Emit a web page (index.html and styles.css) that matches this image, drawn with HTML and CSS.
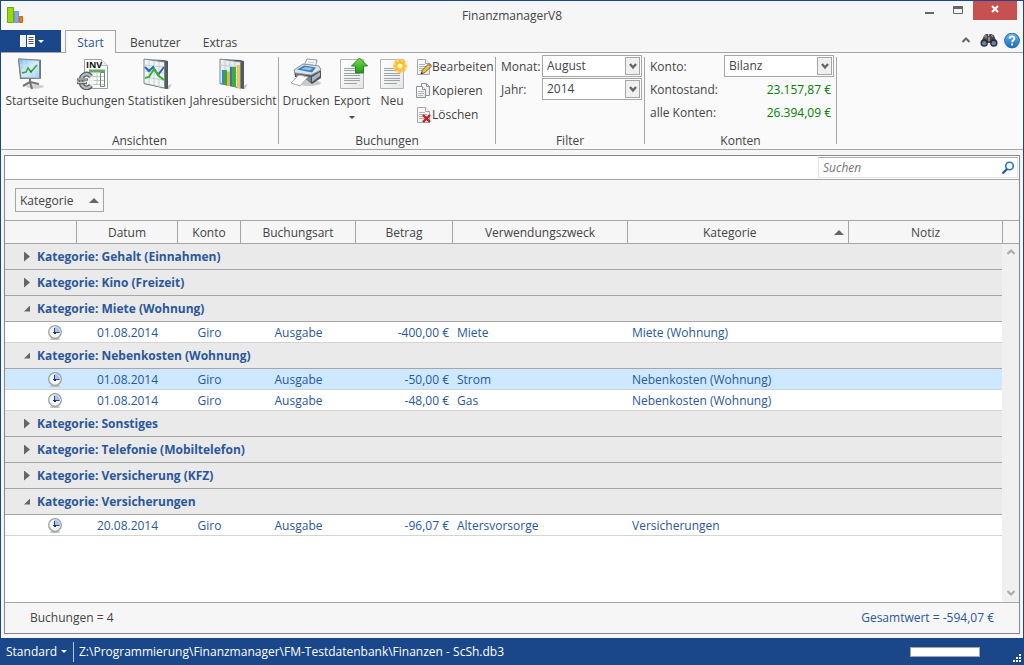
FILE: index.html
```html
<!DOCTYPE html>
<html lang="de">
<head>
<meta charset="utf-8">
<title>FinanzmanagerV8</title>
<link rel="stylesheet" href="styles.css">
</head>
<body>
<svg class="defs" aria-hidden="true">
  <defs>
    <linearGradient id="sky" x1="0" y1="0" x2="1" y2="1"><stop offset="0" stop-color="#7fbbe6"/><stop offset=".5" stop-color="#d3ecf9"/><stop offset="1" stop-color="#a4d3f0"/></linearGradient>
    <linearGradient id="steel" x1="0" y1="0" x2="1" y2="0"><stop offset="0" stop-color="#9aa3aa"/><stop offset="1" stop-color="#4d565d"/></linearGradient>
    <linearGradient id="paper" x1="0" y1="0" x2="1" y2="1"><stop offset="0" stop-color="#ffffff"/><stop offset="1" stop-color="#e3e6e8"/></linearGradient>
    <linearGradient id="green" x1="0" y1="0" x2="0" y2="1"><stop offset="0" stop-color="#7be04a"/><stop offset="1" stop-color="#1d9a18"/></linearGradient>
    <radialGradient id="glow"><stop offset="0" stop-color="#fff6b0"/><stop offset=".3" stop-color="#ffc02c"/><stop offset=".65" stop-color="#ffc94c"/><stop offset="1" stop-color="#ffd976" stop-opacity="0"/></radialGradient>
    <linearGradient id="help" x1="0" y1="0" x2="0" y2="1"><stop offset="0" stop-color="#6db8ee"/><stop offset="1" stop-color="#1668b4"/></linearGradient>
    <symbol id="clock" viewBox="0 0 16 16">
      <ellipse cx="8" cy="14" rx="5" ry="1.100" fill="#b9bbb9"/>
      <circle cx="8" cy="7" r="6.300" fill="#f1f4f1" stroke="#9aa3a1" stroke-width="1.300"/>
      <path d="M7.500 2a5 5 0 0 1 5.500 5.500H7.500z" fill="#a9c1f4"/>
      <path d="M7.500 3v6M6 7.500h6.500" stroke="#2c4390" stroke-width="1" fill="none"/>
      <path d="M7 7h2v2H7z" fill="#222c55"/>
    </symbol>
    <symbol id="mini-page" viewBox="0 0 16 16">
      <path d="M1.500 .5h8l4 4v11h-12z" fill="url(#paper)" stroke="#a5a9ac"/>
      <path d="M9.500.5v4h4" fill="#fff" stroke="#a5a9ac"/>
      <path d="M3 5.500h6M3 7.500h8M3 9.500h8M3 11.500h8" stroke="#b1b5b8"/>
    </symbol>
  </defs>
</svg>
<div class="window">
  <header class="titlebar">
    <svg class="app-icon" width="18" height="18" viewBox="0 0 18 18">
      <path d="M.5 .5h6v15h-6z" fill="#98d810" stroke="#6ea90a"/><path d="M7.500 4.500h4v11h-4z" fill="#82a6ea" stroke="#7394d4"/><path d="M12.500 9.500h3v6h-3z" fill="#f18412" stroke="#c9650a"/>
    </svg>
    <h1 class="title">FinanzmanagerV8</h1>
    <div class="window-buttons">
      <button class="win-button" aria-label="Minimieren"><svg width="12" height="12" viewBox="0 0 12 12"><path d="M1 7h9v2H1z" fill="#666"/></svg></button>
      <button class="win-button" aria-label="Maximieren"><svg width="12" height="12" viewBox="0 0 12 12"><path d="M1.500 1.500h9v7h-9z" fill="none" stroke="#666"/><path d="M1 1h10v3H1z" fill="#666"/></svg></button>
      <button class="win-button close" aria-label="Schließen"><svg width="10" height="10" viewBox="0 0 10 10"><path d="M2 1l6 6M8 1L2 7" stroke="#fff" stroke-width="2"/></svg></button>
    </div>
  </header>

  <nav class="tabs">
    <button class="app-menu" aria-label="Anwendungsmenü">
      <svg width="26" height="14" viewBox="0 0 26 14"><path d="M1 1h15v12H1z" fill="#fff"/><path d="M2 2h6v10H2z" fill="#eef1f6"/><path d="M7.500 1v12" stroke="#19478a"/><path d="M9.500 3.500h5M9.500 5.500h5M9.500 7.500h5M9.500 9.500h5" stroke="#555"/><path d="M19 6h6l-3 3z" fill="#fff"/></svg>
    </button>
    <button class="tab selected">Start</button>
    <button class="tab">Benutzer</button>
    <button class="tab">Extras</button>
    <div class="tab-tools">
      <button class="tool fold" aria-label="Menüband minimieren"><svg width="10" height="16" viewBox="0 0 10 16"><path d="M1.500 9L5 5.500 8.500 9" fill="none" stroke="#666" stroke-width="2"/></svg></button>
      <button class="tool" aria-label="Suchen"><svg width="18" height="16" viewBox="0 0 18 16">
        <path d="M1 10L4 2.500 6 1h2l.7 2.500L9.500 1h2l2.500 1.500L17 10z" fill="#48484a"/><path d="M4 3.500l2-1v3M11 2.500l2 1" stroke="#aaa" fill="none"/><path d="M8 4h2v4H8z" fill="#8c8c8c"/>
        <circle cx="4.200" cy="10" r="3.700" fill="#2c2c2e"/><circle cx="13.800" cy="10" r="3.700" fill="#2c2c2e"/><circle cx="4.200" cy="10.200" r="2.200" fill="#5c87b5"/><circle cx="13.800" cy="10.200" r="2.200" fill="#5c87b5"/></svg></button>
      <button class="tool" aria-label="Hilfe"><svg width="16" height="16" viewBox="0 0 16 16"><circle cx="8" cy="7.500" r="7.400" fill="url(#help)" stroke="#2a6cab"/><path d="M5.600 5.700C5.700 2.700 10.400 2.700 10.400 5.500c0 1.700-2.300 1.800-2.300 3.700M8.100 10.500v1.900" fill="none" stroke="#fff" stroke-width="1.900"/></svg></button>
    </div>
  </nav>

  <section class="ribbon">
    <div class="group">
      <div class="group-body">
        <button class="big start"><svg width="32" height="32" viewBox="0 0 32 32">
          <ellipse cx="19" cy="28.500" rx="9" ry="2.200" fill="#d2d2d2"/>
          <path d="M14 20v5M14 24l-7 4M14 24l2 7M14 24l9 2" stroke="#777" stroke-width="2.200" fill="none"/>
          <path d="M2 .8l23 1v19L4 21z" fill="#6d767c"/><path d="M2.500 .8l21 1.500v18L5 20z" fill="url(#sky)" stroke="#7b868e"/>
          <path d="M8 2v17M13 3v16M18 3v16M4 7h19M5 12h18" stroke="#cdeafa" stroke-width=".7"/>
          <path d="M6 15l4-1 2-4 3 4 6-7" fill="none" stroke="#3fa13c" stroke-width="1.500"/><circle cx="15" cy="13.500" r="1" fill="#237d25"/></svg>Startseite</button>
        <button class="big book"><svg width="32" height="32" viewBox="0 0 32 32">
          <path d="M7.500 1.500h17l6 6v23h-23z" fill="#fff" stroke="#9a9fa2"/><path d="M24.500 1.500v6h6" fill="#eceeef" stroke="#b5b9bb"/>
          <path d="M12 11.500h16v3H12z" fill="#62ad5e"/><path d="M12.500 14.500h15v12h-15zM12.500 18.500h15M12.500 22.500h15M20 14.500v12" fill="none" stroke="#b7cbb5"/>
          <path d="M23.500 14.500h4v14h-4z" fill="none" stroke="#75837c"/>
          <text class="inv" x="9" y="10">INV</text>
          <circle cx="9" cy="23" r="8" fill="#f3f3f3" opacity=".85"/>
          <path d="M14 18.500C10 13.500 4 17 4 23s6 9.500 10 4.500" fill="none" stroke="#555d61" stroke-width="5"/><path d="M14 18.500C10 13.500 4 17 4 23s6 9.500 10 4.500" fill="none" stroke="#b3babe" stroke-width="2.400"/>
          <path d="M0 21.500h11M0 25h10" stroke="#697176" stroke-width="2.400"/><path d="M1 21h9M1 24.500h8" stroke="#c5cacd"/></svg>Buchungen</button>
        <button class="big stat"><svg width="32" height="32" viewBox="0 0 32 32">
          <path d="M18 30l13-4-3 5z" fill="#c9c9c9"/><path d="M24 4.500L27 3v27l-3 1z" fill="#4f5b63"/><path d="M3 1l20 1 4 1v28L3 26z" fill="url(#steel)"/>
          <path d="M3 1l20.500 3v26L3 25.500z" fill="#f2f5f6" stroke="#7d878d"/><path d="M8 2v24M13 3v24M18 4v25M3 7l20 2M3 13l20 2M3 19l20 3" stroke="#c5ced2" fill="none"/>
          <path d="M4 9l4 4 4-4 5 8 6-8" fill="none" stroke="#2468b5" stroke-width="2"/><path d="M4 20l4-1 5-8 5 7 5 4" fill="none" stroke="#35b329" stroke-width="2"/></svg>Statistiken</button>
        <button class="big year"><svg width="32" height="32" viewBox="0 0 32 32">
          <path d="M18 30l13-4-3 5z" fill="#c9c9c9"/><path d="M3 1l20 1 4 1v28L3 26z" fill="#4f5b63"/>
          <path d="M3 1l20.500 3v26L3 25.500z" fill="#e9edef" stroke="#7d878d"/><path d="M8 2v24M13 3v24M18 4v25M3 7l20 2M3 13l20 2M3 19l20 3" stroke="#c5ced2" fill="none"/>
          <path d="M5 12h2v14H5z" fill="#258dd2"/><path d="M7 12h3v15H7z" fill="#39a73c"/><path d="M10 14h3v14h-3z" fill="#eab434"/><path d="M13 9h2v19h-2z" fill="#2878c4"/><path d="M15 9h4v20h-4z" fill="#41ad38"/><path d="M20 7h3v23h-3z" fill="#e8c753"/></svg>Jahresübersicht</button>
      </div>
      <div class="group-title">Ansichten</div>
    </div>
    <div class="group">
      <div class="group-body">
        <button class="big print"><svg width="32" height="32" viewBox="0 0 32 32">
          <ellipse cx="19" cy="25" rx="12" ry="3" fill="#c9c9c9"/>
          <path d="M14 8L17 1l10 1-2 9z" fill="#f6f8fa" stroke="#8f999f"/><path d="M18 4l6 .8M17 6l6 .8" stroke="#c1c9ce"/>
          <path d="M4 12l9-6 16 2 2 4v8l-9 6-5-4-12-3z" fill="#4b5257"/><path d="M4 12l9-6 16 2 2 4-10 5-16-2z" fill="#dfe5ea" stroke="#8c979e"/>
          <path d="M7 11.500l7-4 12 2-4 5z" fill="#3d7db6"/><path d="M11 11l4-2 8 1-3 2.500z" fill="#8fc3ea"/>
          <path d="M6 16l15 3v5l-4-2-11-2z" fill="#78838a"/><path d="M22 19l8-5v4l-8 6z" fill="#aab4ba"/>
          <path d="M9 17l9 2-8 9-9-3z" fill="#fff" stroke="#a7b0b6"/></svg>Drucken</button>
        <button class="big export"><svg width="32" height="32" viewBox="0 0 32 32">
          <path d="M4.500 1.500h23v29h-23z" fill="url(#paper)" stroke="#b1b4b6"/><path d="M8 10.500h15M8 12.500h15M8 15.500h16M8 17.500h16M8 20.500h16M8 22.500h16M8 25.500h13" stroke="#9da2a5"/>
          <path d="M23.500 0l8 8h-4v7h-8V8h-4z" fill="url(#green)" stroke="#278222"/></svg>Export<span class="caret"></span></button>
        <button class="big new"><svg width="32" height="32" viewBox="0 0 32 32">
          <path d="M4.500 1.500h23v29h-23z" fill="url(#paper)" stroke="#b1b4b6"/><path d="M8 10.500h15M8 12.500h15M8 15.500h16M8 17.500h16M8 20.500h16M8 22.500h16M8 25.500h13" stroke="#9da2a5"/>
          <circle cx="24" cy="8" r="8" fill="url(#glow)"/><path d="M24 1v14M17 8h14M19 3l10 10M29 3L19 13" stroke="#ffb52b" stroke-width="1.200"/><circle cx="24" cy="8" r="2.600" fill="#fff6bb"/></svg>Neu</button>
        <div class="small-stack">
          <button class="small"><svg width="16" height="16" viewBox="0 0 16 16"><use href="#mini-page"/><path d="M5 15l1.500-4L13 4.500l2.500 2.500L9 13.500z" fill="#f0bf3c" stroke="#77653a"/><path d="M12 5.500l1.500-1.500 2 2-1.500 1.500z" fill="#c47464"/><path d="M5 15l.7-2 1.300 1.200z" fill="#222"/></svg>Bearbeiten</button>
          <button class="small"><svg width="16" height="16" viewBox="0 0 16 16"><path d="M5.500.5h5l3 3v9h-8z" fill="url(#paper)" stroke="#8c949a"/><path d="M10.500.5v3h3" fill="none" stroke="#8c949a"/><path d="M.5 3.500h6l3 3v8h-9z" fill="url(#paper)" stroke="#8c949a"/><path d="M6.500 3.500v3h3" fill="#fff" stroke="#8c949a"/><path d="M2 8.500h6M2 10.500h6M2 12.500h5" stroke="#aeb7bf"/></svg>Kopieren</button>
          <button class="small"><svg width="16" height="16" viewBox="0 0 16 16"><use href="#mini-page"/><path d="M7 8l7 7M14 8l-7 7" stroke="#c81d1d" stroke-width="2.400"/></svg>Löschen</button>
        </div>
      </div>
      <div class="group-title">Buchungen</div>
    </div>
    <div class="group">
      <div class="group-body fields filter">
        <label for="monat">Monat:</label>
        <span class="combo"><select id="monat"><option>August</option></select><span class="combo-arrow"><svg width="8" height="7" viewBox="0 0 8 7"><path d="M1 1l3 3.500L7 1" fill="none" stroke="#666" stroke-width="2.400"/></svg></span></span>
        <label for="jahr">Jahr:</label>
        <span class="combo"><select id="jahr"><option>2014</option></select><span class="combo-arrow"><svg width="8" height="7" viewBox="0 0 8 7"><path d="M1 1l3 3.500L7 1" fill="none" stroke="#666" stroke-width="2.400"/></svg></span></span>
      </div>
      <div class="group-title">Filter</div>
    </div>
    <div class="group">
      <div class="group-body fields accounts">
        <label for="konto">Konto:</label>
        <span class="combo"><select id="konto"><option>Bilanz</option></select><span class="combo-arrow"><svg width="8" height="7" viewBox="0 0 8 7"><path d="M1 1l3 3.500L7 1" fill="none" stroke="#666" stroke-width="2.400"/></svg></span></span>
        <span>Kontostand:</span><output class="money">23.157,87 €</output>
        <span>alle Konten:</span><output class="money">26.394,09 €</output>
      </div>
      <div class="group-title">Konten</div>
    </div>
  </section>

  <main class="content">
    <div class="panel">
      <div class="search-row">
        <label class="search"><input type="search" placeholder="Suchen" aria-label="Suchen">
          <svg width="14" height="14" viewBox="0 0 14 14"><circle cx="8.500" cy="5" r="3.800" fill="#f2f9ff" stroke="#2f75bf" stroke-width="1.600"/><path d="M6 8l-4.500 4.500" stroke="#24499a" stroke-width="2.200"/></svg></label>
      </div>
      <div class="group-by"><button class="group-chip">Kategorie<span class="sort"></span></button></div>
      <div class="grid">
        <table class="bookings">
          <colgroup><col class="c-icon"><col class="c-date"><col class="c-account"><col class="c-type"><col class="c-amount"><col class="c-purpose"><col class="c-category"><col></colgroup>
          <thead><tr><th></th><th>Datum</th><th>Konto</th><th>Buchungsart</th><th>Betrag</th><th>Verwendungszweck</th><th><span class="sorted">Kategorie<span class="sort"></span></span></th><th>Notiz</th></tr></thead>
          <tbody>
            <tr class="category"><td colspan="8"><button aria-expanded="false">Kategorie: Gehalt (Einnahmen)</button></td></tr>
            <tr class="category"><td colspan="8"><button aria-expanded="false">Kategorie: Kino (Freizeit)</button></td></tr>
            <tr class="category"><td colspan="8"><button aria-expanded="true">Kategorie: Miete (Wohnung)</button></td></tr>
            <tr class="entry"><td class="icon"><svg width="16" height="16"><use href="#clock"/></svg></td><td class="mid">01.08.2014</td><td class="mid">Giro</td><td class="mid">Ausgabe</td><td class="num">-400,00 €</td><td>Miete</td><td>Miete (Wohnung)</td><td></td></tr>
            <tr class="category"><td colspan="8"><button aria-expanded="true">Kategorie: Nebenkosten (Wohnung)</button></td></tr>
            <tr class="entry current"><td class="icon"><svg width="16" height="16"><use href="#clock"/></svg></td><td class="mid">01.08.2014</td><td class="mid">Giro</td><td class="mid">Ausgabe</td><td class="num">-50,00 €</td><td>Strom</td><td>Nebenkosten (Wohnung)</td><td></td></tr>
            <tr class="entry"><td class="icon"><svg width="16" height="16"><use href="#clock"/></svg></td><td class="mid">01.08.2014</td><td class="mid">Giro</td><td class="mid">Ausgabe</td><td class="num">-48,00 €</td><td>Gas</td><td>Nebenkosten (Wohnung)</td><td></td></tr>
            <tr class="category"><td colspan="8"><button aria-expanded="false">Kategorie: Sonstiges</button></td></tr>
            <tr class="category"><td colspan="8"><button aria-expanded="false">Kategorie: Telefonie (Mobiltelefon)</button></td></tr>
            <tr class="category"><td colspan="8"><button aria-expanded="false">Kategorie: Versicherung (KFZ)</button></td></tr>
            <tr class="category"><td colspan="8"><button aria-expanded="true">Kategorie: Versicherungen</button></td></tr>
            <tr class="entry"><td class="icon"><svg width="16" height="16"><use href="#clock"/></svg></td><td class="mid">20.08.2014</td><td class="mid">Giro</td><td class="mid">Ausgabe</td><td class="num">-96,07 €</td><td>Altersvorsorge</td><td>Versicherungen</td><td></td></tr>
          </tbody>
        </table>
        <div class="scroll-column">
          <div class="corner"></div>
          <div class="track">
            <button aria-label="Nach oben"><svg width="8" height="6" viewBox="0 0 8 6"><path d="M.5 5L4 1.500 7.500 5" fill="none" stroke="#aaa" stroke-width="2"/></svg></button>
            <button aria-label="Nach unten"><svg width="8" height="6" viewBox="0 0 8 6"><path d="M.5 1L4 4.500 7.500 1" fill="none" stroke="#aaa" stroke-width="2"/></svg></button>
          </div>
        </div>
      </div>
      <div class="summary"><span>Buchungen = 4</span><span class="total">Gesamtwert = -594,07 €</span></div>
    </div>
  </main>

  <footer class="statusbar">
    <button class="mode">Standard<span class="caret"></span></button>
    <span class="path">Z:\Programmierung\Finanzmanager\FM-Testdatenbank\Finanzen - ScSh.db3</span>
    <div class="progress"></div>
    <svg class="grip" width="8" height="8" viewBox="0 0 8 8"><path d="M6 0h2v2H6zM6 3h2v2H6zM3 3h2v2H3zM6 6h2v2H6zM3 6h2v2H3zM0 6h2v2H0z" fill="#fff"/></svg>
  </footer>
</div>
</body>
</html>
```

FILE: styles.css
```css
* { box-sizing: border-box; }

body {
  margin: 0;
  font: 12px/16px "Open Sans", "Noto Sans", sans-serif;
  color: #444;
}

button, input, select {
  font: inherit;
  color: inherit;
  margin: 0;
  padding: 0;
  border: 0;
  background: none;
}

svg { display: block; flex: none; }
.defs { position: absolute; width: 0; height: 0; }

.window {
  display: flex;
  flex-direction: column;
  min-height: 100vh;
  border: 1px solid #19478a;
  background: #f6f6f6;
}

/* Title bar */
.titlebar {
  display: grid;
  grid-template-columns: 1fr auto 1fr;
  height: 29px;
}
.app-icon { margin: 6px 0 0 6px; }
.title { margin: 7px 0 0; font-size: 12px; font-weight: 400; line-height: 16px; }
.window-buttons { display: flex; justify-content: flex-end; padding-right: 6px; }
.win-button { display: flex; justify-content: center; width: 28px; height: 19px; padding-top: 4px; }
.close { width: 44px; margin-left: 1px; background: #c75050; }

/* Tabs */
.tabs {
  display: flex;
  height: 23px;
  border-bottom: 1px solid #a6a6a6;
}
.app-menu { display: flex; justify-content: center; align-items: center; width: 60px; height: 22px; margin-right: 4px; padding-left: 2px; background: #19478a; }
.tab { height: 23px; padding: 3px 11px 0; }
.tab.selected { width: 51px; margin-right: 3px; padding: 2px 0 0; border: 1px solid #a6a6a6; border-bottom: 0; background: #fafafa; color: #2a579a; }
.tab-tools { display: flex; gap: 6px; align-items: center; margin-left: auto; padding-right: 3px; }
.fold { margin-right: 3px; }

/* Ribbon */
.ribbon {
  display: flex;
  height: 97px;
  padding-top: 2px;
  background: #fafafa;
  border-bottom: 1px solid #a6a6a6;
}
.group { position: relative; display: flex; flex-direction: column; padding-right: 1px; }
.group::after { content: ""; position: absolute; top: 2px; right: 0; bottom: 5px; width: 1px; background: #a6a6a6; }
.group-body { display: flex; flex: 1; padding: 0 2px; }
.group-title { text-align: center; }
.big { display: flex; flex-direction: column; align-items: center; padding-top: 3px; white-space: nowrap; }
.big svg { margin-bottom: 3px; }
.start { width: 58px; }
.book, .stat { width: 64px; }
.year { width: 88px; }
.print { width: 50px; }
.export { width: 42px; }
.new { width: 38px; }
.caret { width: 0; height: 0; border: 3px solid transparent; border-bottom: 0; border-top-color: #444; }
.export .caret { margin-top: 7px; }
.inv { font: 700 9px "Open Sans", sans-serif; fill: #111; }
.small-stack { display: flex; flex-direction: column; margin-left: 5px; }
.small { display: flex; align-items: center; width: 77px; height: 24px; }
.group:first-child .group-body { padding-right: 1px; }

.fields { display: grid; align-content: start; align-items: center; }
.filter { grid-template-columns: 41px 100px; grid-auto-rows: 23px; padding: 0 2px 0 5px; }
.accounts { grid-template-columns: 74px 110px; grid-auto-rows: 23px; padding: 0 2px 0 5px; }
.money { padding-right: 3px; text-align: right; color: #008000; }
.combo { position: relative; display: block; align-self: start; }
.combo select { display: block; width: 100%; height: 22px; padding: 0 20px 0 4px; border: 1px solid #a6a6a6; border-radius: 0; background: #fff; appearance: none; }
.combo-arrow {
  position: absolute;
  top: 2px;
  right: 2px;
  display: flex;
  align-items: center;
  justify-content: center;
  width: 15px;
  height: 18px;
  border: 1px solid #a6a6a6;
  background: #f0f0f0;
  pointer-events: none;
}

/* Booking panel */
.content { display: flex; flex: 1; padding: 5px 3px 4px; }
.panel { display: flex; flex: 1; flex-direction: column; min-width: 0; border: 1px solid #868690; }
.search-row { display: flex; justify-content: flex-end; height: 24px; padding: 1px; background: #fff; border-bottom: 1px solid #a6a6a6; }
.search { display: flex; align-items: center; width: 200px; height: 21px; padding: 0 2px 0 4px; border: 1px solid #e1e3e8; border-top-color: #aaacb4; }
.search input { flex: 1; min-width: 0; outline: 0; }
.search input::placeholder { font-style: italic; color: #757575; opacity: 1; }
.group-by { height: 41px; padding: 8px 10px; border-bottom: 1px solid #a6a6a6; }
.group-chip { display: flex; align-items: center; justify-content: space-between; width: 89px; height: 24px; padding: 2px 4px 0; border: 1px solid #a6a6a6; }
.sort { width: 0; height: 0; margin-bottom: 2px; border: 5px solid transparent; border-top: 0; border-bottom-color: #666; }

.grid { display: flex; flex: 1; align-items: stretch; background: #fff; }
.bookings { flex: 1; align-self: flex-start; width: 100%; min-width: 0; table-layout: fixed; border-spacing: 0; }
.c-icon { width: 72px; }
.c-date { width: 101px; }
.c-account { width: 63px; }
.c-type { width: 115px; }
.c-amount { width: 97px; }
.c-purpose { width: 175px; }
.c-category { width: 221px; }
.bookings th { height: 23px; padding: 2px 0 0; border: 1px solid #a6a6a6; border-width: 0 1px 1px 0; background: #f6f6f6; font-weight: 400; }
.bookings th:last-child { border-right: 0; }
.sorted { display: grid; grid-template-columns: 6fr auto 7fr; align-items: center; padding-right: 4px; }
.sorted::before { content: ""; }
.sorted .sort { justify-self: end; }
.bookings td { padding: 2px 4px 0; white-space: nowrap; }
.bookings .category td { height: 26px; padding: 0 19px; background: #eaeaea; border-bottom: 1px solid #a6a6a6; }
.category button { display: flex; align-items: center; font-weight: 700; color: #2a579a; }
.category button::before { content: ""; width: 6px; height: 10px; margin-right: 7px; background: #666; clip-path: polygon(0 0, 100% 50%, 0 100%); }
.category button[aria-expanded="true"]::before { height: 6px; clip-path: polygon(100% 0, 100% 100%, 0 100%); }
.entry { color: #2a579a; }
.entry td { height: 21px; border-bottom: 1px solid #d4d4d4; }
.bookings .mid { text-align: center; }
.bookings .num { padding-right: 4px; text-align: right; }
.bookings .icon { padding-left: 42px; }
.current { background: #cde8ff; }

.scroll-column { display: flex; flex: none; flex-direction: column; width: 17px; }
.corner { height: 23px; border: 1px solid #a6a6a6; border-width: 0 0 1px 1px; background: #f6f6f6; }
.track { display: flex; flex: 1; flex-direction: column; justify-content: space-between; align-items: center; padding: 5px 0 6px; background: #f0f0f0; }
.summary { display: flex; align-items: center; justify-content: space-between; height: 31px; padding: 0 25px; border-top: 1px solid #a6a6a6; }
.total { color: #2a579a; }

/* Status bar */
.statusbar { display: flex; align-items: center; height: 26px; padding-top: 1px; background: #19478a; color: #fff; }
.mode { display: flex; align-items: center; justify-content: space-between; width: 73px; height: 20px; padding: 0 6px 0 5px; border-right: 1px solid #b5c5dd; }
.mode .caret { border-top-color: #fff; }
.path { padding-left: 5px; }
.progress { width: 70px; height: 10px; margin-left: auto; border: 1px solid #a6a6a6; background: #fff; }
.grip { align-self: flex-end; margin: 0 2px 2px 33px; }
```
